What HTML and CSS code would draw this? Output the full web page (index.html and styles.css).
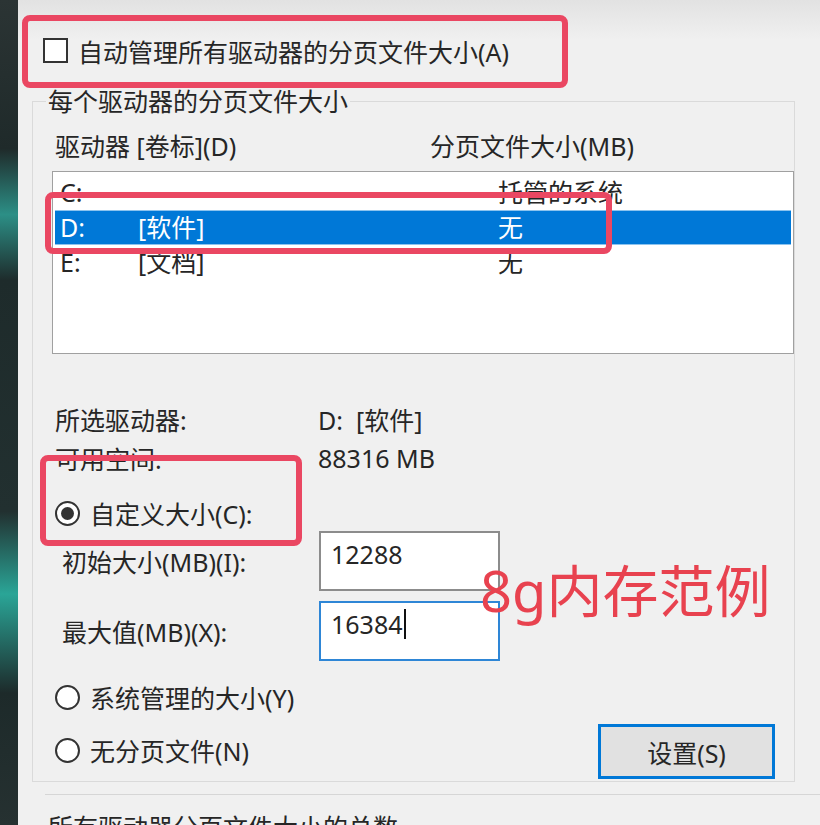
FILE: index.html
```html
<!DOCTYPE html>
<html lang="zh-CN">
<head>
    <meta charset="UTF-8">
    <meta name="viewport" content="width=device-width, initial-scale=1.0">
    <title>虚拟内存</title>
    <link rel="stylesheet" href="styles.css">
</head>
<body>
    <div class="screen">
        <div class="desktop-edge"></div>
        <div class="dialog">
            <label class="auto-row">
                <span class="checkbox"></span>
                <span>自动管理所有驱动器的分页文件大小(A)</span>
            </label>

            <fieldset class="group">
                <legend>每个驱动器的分页文件大小</legend>
                <div class="list-head">
                    <span>驱动器 [卷标](D)</span>
                    <span>分页文件大小(MB)</span>
                </div>
                <div class="listbox">
                    <div class="row"><span>C:</span><span></span><span>托管的系统</span></div>
                    <div class="row selected"><span>D:</span><span>[软件]</span><span>无</span></div>
                    <div class="row"><span>E:</span><span>[文档]</span><span>无</span></div>
                </div>

                <div class="info">
                    <span>所选驱动器:</span><span>D:&nbsp;&nbsp;[软件]</span>
                    <span>可用空间:</span><span>88316 MB</span>
                </div>

                <label class="radio-row custom">
                    <span class="radio checked"></span>
                    <span>自定义大小(C):</span>
                </label>

                <div class="sizes">
                    <span>初始大小(MB)(I):</span>
                    <div class="field">12288</div>
                    <span>最大值(MB)(X):</span>
                    <div class="field focused">16384<span class="caret"></span></div>
                </div>

                <div class="bottom">
                    <div class="radios">
                        <label class="radio-row">
                            <span class="radio"></span>
                            <span>系统管理的大小(Y)</span>
                        </label>
                        <label class="radio-row">
                            <span class="radio"></span>
                            <span>无分页文件(N)</span>
                        </label>
                    </div>
                    <button class="set-btn">设置(S)</button>
                </div>
            </fieldset>

            <div class="separator"></div>
            <div class="total">所有驱动器分页文件大小的总数</div>

            <!-- annotations drawn over the dialog -->
            <div class="mark mark-auto"></div>
            <div class="mark mark-drive"></div>
            <div class="mark mark-custom"></div>
            <div class="note">8g内存范例</div>
        </div>
    </div>
</body>
</html>
```

FILE: styles.css
```css
body {
    margin: 0;
    font-family: "Noto Sans", "Noto Sans CJK SC", sans-serif;
    font-size: 25px;
    color: #262626;
    overflow: hidden;
}
.screen {
    display: flex;
    width: 820px;
    height: 825px;
    overflow: hidden;
}
.desktop-edge {
    width: 18px;
    flex-shrink: 0;
    background: linear-gradient(180deg, #2b3434 0%, #1f2a2a 18%, #2c8f86 26%, #1e2b2b 34%, #223030 62%, #2aa597 72%, #1d2a2a 84%, #263131 100%);
}
.dialog {
    position: relative;
    flex: 1;
    background: linear-gradient(180deg, #e2e2e2 0, #f0f0f0 40px, #f0f0f0 100%);
}
.auto-row {
    display: flex;
    align-items: center;
    gap: 10px;
    height: 29px;
    margin: 36px 0 0 25px;
}
.checkbox {
    width: 21px;
    height: 21px;
    border: 2px solid #333;
    background: #fff;
}
.group {
    box-sizing: border-box;
    width: 762px;
    margin: 22px 0 0 14px;
    padding: 0 0 2px;
    border: 1px solid #dadada;
}
.group legend {
    margin-left: 13px;
    padding: 0 2px;
    line-height: 28px;
}
.list-head {
    display: grid;
    grid-template-columns: 375px 1fr;
    padding-left: 22px;
    margin-top: 17px;
    line-height: 28px;
}
.listbox {
    box-sizing: border-box;
    width: 742px;
    height: 183px;
    margin: 11px 0 0 19px;
    padding: 3px 2px;
    background: #fff;
    border: 1px solid #a0a0a0;
}
.row {
    display: grid;
    grid-template-columns: 78px 360px 1fr;
    height: 35px;
    line-height: 35px;
    padding-left: 5px;
}
.row.selected {
    background: #0078d7;
    color: #fff;
    box-shadow: inset 0 1px 0 #8cc3ee, inset 0 -1px 0 #8cc3ee;
}
.info {
    display: grid;
    grid-template-columns: 263px 1fr;
    grid-auto-rows: 39px;
    align-items: center;
    padding-left: 22px;
    margin-top: 45px;
}
.radio-row {
    display: flex;
    align-items: center;
    gap: 10px;
    height: 28px;
    padding-left: 22px;
}
.custom {
    margin-top: 22px;
}
.radio {
    box-sizing: border-box;
    width: 25px;
    height: 25px;
    border: 2px solid #333;
    border-radius: 50%;
    background: #fff;
    display: flex;
    align-items: center;
    justify-content: center;
}
.radio.checked::after {
    content: "";
    width: 13px;
    height: 13px;
    border-radius: 50%;
    background: #333;
}
.sizes {
    display: grid;
    grid-template-columns: 257px 181px;
    row-gap: 10px;
    align-items: center;
    padding-left: 29px;
    margin-top: 4px;
}
.field {
    box-sizing: border-box;
    height: 60px;
    padding: 6px 0 0 10px;
    line-height: 30px;
    background: #fff;
    border: 2px solid #8c8c8c;
}
.field.focused {
    border-color: #2e86d6;
}
.caret {
    display: inline-block;
    width: 2px;
    height: 30px;
    margin-left: 1px;
    vertical-align: top;
    background: #111;
}
.bottom {
    display: flex;
    justify-content: space-between;
    align-items: flex-start;
    margin-top: 22px;
    padding-right: 19px;
}
.radios {
    display: flex;
    flex-direction: column;
    gap: 25px;
}
.set-btn {
    width: 177px;
    height: 55px;
    margin-top: 41px;
    font: inherit;
    color: #262626;
    background: #e1e1e1;
    border: 3px solid #0078d7;
}
.separator {
    height: 1px;
    margin: 12px 0 0 27px;
    background: #d6d6d6;
}
.total {
    margin: 18px 0 0 30px;
    line-height: 28px;
}
.mark {
    position: absolute;
    border: 6px solid #ea4762;
    border-radius: 8px;
    box-sizing: border-box;
}
.mark-auto {
    left: 4px;
    top: 15px;
    width: 546px;
    height: 73px;
}
.mark-drive {
    left: 27px;
    top: 192px;
    width: 567px;
    height: 62px;
}
.mark-custom {
    left: 22px;
    top: 455px;
    width: 262px;
    height: 91px;
}
.note {
    position: absolute;
    left: 462px;
    top: 562px;
    font-size: 56px;
    line-height: 1;
    color: #e8424f;
}
```
